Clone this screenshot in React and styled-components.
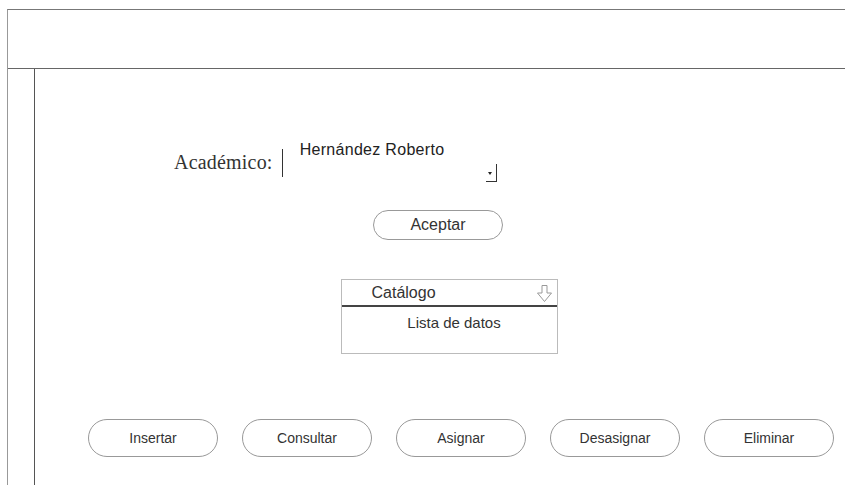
import React from "react";
import styled, { createGlobalStyle } from "styled-components";

const GlobalStyle = createGlobalStyle`
  html, body {
    margin: 0;
    padding: 0;
    background: #fff;
  }
  body {
    font-family: "Liberation Sans", Arial, sans-serif;
    color: #222;
  }
`;

const Frame = styled.div`
  margin: 9px 0 0 7px;
  height: 476px;
  border-top: 1px solid #777;
  border-left: 1px solid #999;
  display: flex;
  flex-direction: column;
  box-sizing: border-box;
`;

const Header = styled.div`
  height: 58px;
  flex-shrink: 0;
  border-bottom: 1px solid #666;
`;

const Body = styled.div`
  flex: 1;
  display: flex;
`;

const Gutter = styled.div`
  width: 26px;
  flex-shrink: 0;
  border-right: 1px solid #555;
`;

const Content = styled.div`
  flex: 1;
  display: flex;
  flex-direction: column;
`;

const FieldRow = styled.div`
  display: flex;
  align-items: flex-start;
  padding: 72px 0 0 139px;
`;

const Label = styled.span`
  font-family: "Liberation Serif", "Times New Roman", serif;
  font-size: 20px;
  line-height: 23px;
  color: #333;
  margin-top: 10px;
  margin-right: 9px;
  letter-spacing: 0.2px;
`;

/* combo box drawn as a sunken field: left edge plus the lower-right corner */
const Select = styled.div`
  position: relative;
  width: 215px;
  height: 41px;
  box-sizing: border-box;
  padding-left: 18px;
  font-size: 16px;
  line-height: 18px;
  letter-spacing: 0.3px;
  color: #222;

  &::before {
    content: "";
    position: absolute;
    left: 0;
    top: 8px;
    height: 28px;
    border-left: 1px solid #333;
  }

  &::after {
    content: "";
    position: absolute;
    right: 0;
    bottom: 0;
    width: 10px;
    height: 17px;
    border-right: 1px solid #333;
    border-bottom: 1px solid #333;
  }
`;

const Caret = styled.span`
  position: absolute;
  right: 5px;
  bottom: 7px;
  width: 0;
  height: 0;
  border-left: 2px solid transparent;
  border-right: 2px solid transparent;
  border-top: 3px solid #222;
`;

const Center = styled.div`
  display: flex;
  justify-content: center;
  padding-left: ${(p) => Math.max(0, p.$shift || 0)}px;
  padding-right: ${(p) => Math.max(0, -(p.$shift || 0))}px;
  margin-top: ${(p) => p.$top || 0}px;
`;

const Pill = styled.button`
  width: ${(p) => p.$w || 130}px;
  height: ${(p) => p.$h || 30}px;
  border: 1px solid #999;
  border-radius: 999px;
  background: #fff;
  font-family: "Liberation Sans", Arial, sans-serif;
  font-size: ${(p) => p.$fs || 14}px;
  color: #333;
  padding: 0;
  cursor: pointer;
`;

const Catalog = styled.div`
  width: 217px;
  height: 75px;
  box-sizing: border-box;
  border: 1px solid #bbb;
  display: flex;
  flex-direction: column;
`;

const CatalogHead = styled.div`
  height: 27px;
  box-sizing: border-box;
  border-bottom: 2px solid #444;
  display: flex;
  align-items: center;
  justify-content: space-between;
  padding: 1px 4px 0 30px;
  font-size: 16px;
  color: #333;
`;

const CatalogBody = styled.div`
  flex: 1;
  text-align: center;
  padding: 7px 0 0 10px;
  font-size: 15px;
  color: #333;
`;

const ButtonBar = styled.div`
  margin-top: auto;
  margin-bottom: 28px;
  display: flex;
  gap: 24px;
  padding-left: 53px;
`;

const DownArrow = () => (
  <svg width="17" height="19" viewBox="0 0 17 19" fill="none">
    <path
      d="M6 1.5 H11 V9 H15.5 L8.5 17.5 L1.5 9 H6 Z"
      stroke="#999"
      strokeWidth="1"
      strokeLinejoin="round"
    />
  </svg>
);

const actions = ["Insertar", "Consultar", "Asignar", "Desasignar", "Eliminar"];

export default function App() {
  return (
    <>
      <GlobalStyle />
      <Frame>
        <Header />
        <Body>
          <Gutter />
          <Content>
            <FieldRow>
              <Label>Académico:</Label>
              <Select>
                Hernández Roberto
                <Caret />
              </Select>
            </FieldRow>
            <Center $top={28} $shift={-4}>
              <Pill $w={130} $h={30} $fs={16}>
                Aceptar
              </Pill>
            </Center>
            <Center $top={39} $shift={18}>
              <Catalog>
                <CatalogHead>
                  <span>Catálogo</span>
                  <DownArrow />
                </CatalogHead>
                <CatalogBody>Lista de datos</CatalogBody>
              </Catalog>
            </Center>
            <ButtonBar>
              {actions.map((a) => (
                <Pill key={a} $w={130} $h={38}>
                  {a}
                </Pill>
              ))}
            </ButtonBar>
          </Content>
        </Body>
      </Frame>
    </>
  );
}
